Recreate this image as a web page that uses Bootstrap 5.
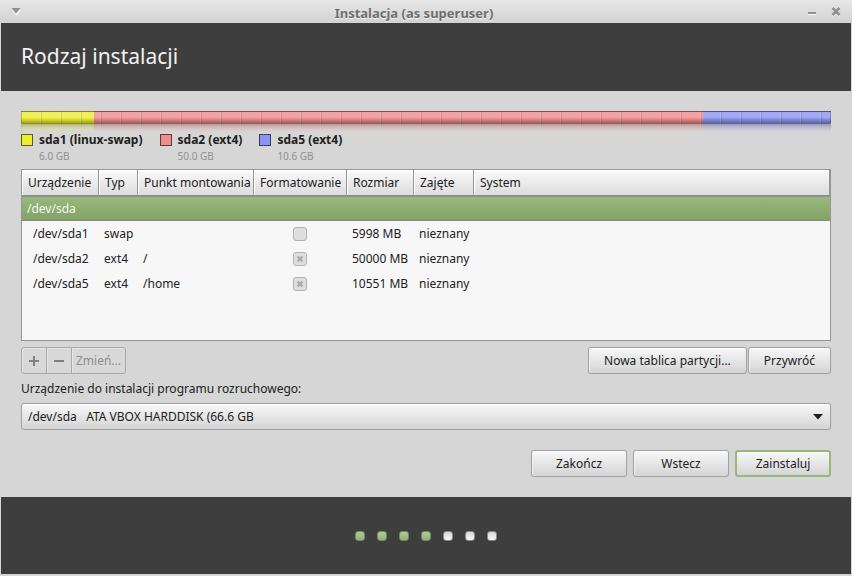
<!DOCTYPE html>
<html lang="pl">
<head>
<meta charset="utf-8">
<meta name="viewport" content="width=device-width, initial-scale=1">
<title>Instalacja (as superuser)</title>
<link href="https://cdn.jsdelivr.net/npm/bootstrap@5.3.0/dist/css/bootstrap.min.css" rel="stylesheet">
<style>
  body {
    font-family: "Noto Sans", "Open Sans", sans-serif;
    font-size: 12px;
    line-height: 16px;
    color: #212121;
    background: #d6d6d6;
  }
  .window-frame { padding: 0 1px 2px; }
  .title-bar {
    height: 23px;
    padding: 0 10px;
    margin: 0 -1px;
    background: linear-gradient(#e6e6e6, #d2d2d2);
    color: #6e6e6e;
    text-shadow: 0 1px #f2f2f2;
  }
  .title-bar h1 { font-size: 13px; line-height: 18px; }
  .title-bar .side-menu { width: 16px; }
  .title-bar .side-controls { width: 40px; }
  .title-bar button { width: 12px; height: 12px; color: #909090; }
  .icon-plain { border: 0; background: none; padding: 0; display: flex; }
  .dark-band { background: #3e3e3e; color: #f2f2f2; }
  .page-head { height: 68px; padding: 0 20px 2px; }
  .page-head h2 { font-size: 21px; line-height: 30px; font-weight: 400; }
  .content-area { padding: 20px 20px 20px; }

  .disk-bar {
    --bs-progress-height: 13px;
    --bs-progress-border-radius: 0;
    border: 0;
    position: relative;
    -webkit-box-reflect: below 0 linear-gradient(transparent 35%, rgba(0, 0, 0, .5));
  }
  .disk-bar::after {
    content: "";
    position: absolute;
    inset: 0;
    border: 1px solid rgba(0, 0, 0, .22);
    border-bottom-color: rgba(0, 0, 0, .4);
    background:
      repeating-linear-gradient(90deg, transparent 0 18px, rgba(255, 255, 255, .12) 18px 19px, rgba(0, 0, 0, .12) 19px 20px),
      linear-gradient(rgba(255, 255, 255, .18), rgba(255, 255, 255, .22) 45%, rgba(0, 0, 0, .05) 65%, rgba(0, 0, 0, .32));
  }
  .fill-swap { background: #eded30; }
  .fill-root { background: #f08c8c; }
  .fill-home { background: #8c94f0; }
  .legend-row { padding-top: 8px; column-gap: 17px; }
  .legend-item { gap: 6px; }
  .swatch { width: 12px; height: 12px; margin-top: 2px; border: 1px solid rgba(0, 0, 0, .6); }
  .legend-size { font-size: 10px; color: #909090; }

  .list-frame { height: 172px; margin-top: 5px; border: 1px solid #959595; background: #f7f7f7; overflow: hidden; }
  .part-table { table-layout: fixed; width: 100%; border-collapse: separate; border-spacing: 0; }
  .part-table th, .part-table td { white-space: nowrap; padding: 0 5px; }
  .part-table thead th {
    height: 27px;
    padding: 0 0 0 6px;
    font-weight: 400;
    border-right: 1px solid #959595;
    border-bottom: 2px solid #8e8e8e;
    background: linear-gradient(#fafafa, #dcdcdc);
    box-shadow: inset 1px 1px #fff;
  }
  .part-table tbody td { height: 25px; }
  .part-table .picked td {
    height: 24px;
    color: #f5f5f5;
    background: linear-gradient(#9ab97c, #82a365);
    border-bottom: 1px solid #878787;
  }
  .part-table td.part-name { padding-left: 11px; }
  .part-table td.format-cell { padding: 0 6px 0 4px; }
  .tick {
    appearance: none;
    display: block;
    width: 14px;
    height: 14px;
    margin: 0 auto;
    border: 1px solid #b2b2b2;
    border-radius: 3px;
    background: #dfdfdf center no-repeat;
  }
  .tick:checked {
    background-image: url("data:image/svg+xml,%3Csvg xmlns='http://www.w3.org/2000/svg' width='8' height='8'%3E%3Cpath d='M1.500 1.500L6.500 6.500M6.500 1.500L1.500 6.500' stroke='%23aaa' stroke-width='2.200'/%3E%3C/svg%3E");
  }

  .gtk-btn {
    --bs-btn-font-size: 12px;
    --bs-btn-line-height: 16px;
    --bs-btn-padding-x: 15px;
    --bs-btn-padding-y: 4px;
    --bs-btn-border-radius: 3px;
    --bs-btn-color: #212121;
    --bs-btn-border-color: #a3a3a3;
    height: 27px;
    background: linear-gradient(#f8f8f8, #d4d4d4);
    box-shadow: inset 0 1px #fff, inset 1px 0 #f2f2f2, 0 0 1px #a8a8a8;
  }
  .gtk-btn.default-action { --bs-btn-border-color: #98b87b; border-width: 2px; padding: 3px 14px; box-shadow: none; }
  .nav-step { width: 96px; }
  .edit-tools { margin-right: auto; }
  .edit-tools .gtk-btn {
    --bs-btn-padding-x: 4px;
    --bs-btn-disabled-color: #8d8d8d;
    --bs-btn-disabled-border-color: #a8a8a8;
    --bs-btn-disabled-opacity: 1;
    min-width: 26px;
    background: #d8d8d8;
    box-shadow: inset 1px 1px #e6e6e6;
  }
  .tool-row { padding-top: 6px; gap: 1px; }
  .device-label { margin-top: 7px; }
  .device-pick { margin-top: 6px; }
  .device-pick select {
    appearance: none;
    display: block;
    width: 100%;
    height: 27px;
    padding: 0 6px;
    border: 1px solid #a3a3a3;
    border-radius: 3px;
    color: #212121;
    background: linear-gradient(#f8f8f8, #d4d4d4);
    box-shadow: inset 0 1px #fff, 0 0 1px #a8a8a8;
  }
  .device-pick svg { position: absolute; right: 8px; top: 11px; pointer-events: none; }
  .nav-row { gap: 6px; margin-top: 20px; }
  .page-foot { flex: 1 0 77px; gap: 12px; }
  .dot { width: 10px; height: 10px; border: 1px solid #8a8a8a; border-radius: 3px; background: linear-gradient(#d8d8d8, #f6f6f6); }
  .dot.done { border-color: #728a5c; background: linear-gradient(#b0cb96, #92b374); }
</style>
</head>
<body>
<div class="window-frame d-flex flex-column min-vh-100">
  <header class="title-bar d-flex align-items-start justify-content-between">
    <div class="side-menu d-flex pt-1 mt-1">
      <button class="icon-plain" type="button" aria-label="Menu okna">
        <svg width="12" height="9" viewBox="0 0 12 9"><path d="M2 2h9L6.500 8z" fill="#f4f4f4"/><path d="M1.500 0h9L6 5.500z" fill="#909090"/></svg>
      </button>
    </div>
    <h1 class="fw-bold mb-0 text-center pt-1">Instalacja (as superuser)</h1>
    <div class="side-controls d-flex justify-content-end gap-2 pt-1">
      <button class="icon-plain me-1" type="button" aria-label="Minimalizuj">
        <svg width="12" height="12" viewBox="0 0 12 12"><path d="M2 10h8v1H2z" fill="#fafafa"/><path d="M2 8h8v2H2z" fill="#909090"/></svg>
      </button>
      <button class="icon-plain" type="button" aria-label="Zamknij">
        <svg width="12" height="14" viewBox="0 0 12 14"><path d="M2.500 5l7 7m0-7l-7 7" stroke="#f4f4f4" stroke-width="2.200"/><path d="M2.500 4l7 7m0-7l-7 7" stroke="#909090" stroke-width="2.600"/></svg>
      </button>
    </div>
  </header>

  <div class="page-head dark-band d-flex align-items-center">
    <h2 class="mb-0">Rodzaj instalacji</h2>
  </div>

  <main class="content-area">
    <div class="progress disk-bar">
      <div class="progress-bar fill-swap" style="width: 9%"></div>
      <div class="progress-bar fill-root" style="width: 75.2%"></div>
      <div class="progress-bar fill-home" style="width: 15.8%"></div>
    </div>
    <div class="legend-row d-flex">
      <div class="legend-item d-flex">
        <span class="swatch fill-swap"></span>
        <div><div class="fw-bold">sda1 (linux-swap)</div><div class="legend-size">6.0 GB</div></div>
      </div>
      <div class="legend-item d-flex">
        <span class="swatch fill-root"></span>
        <div><div class="fw-bold">sda2 (ext4)</div><div class="legend-size">50.0 GB</div></div>
      </div>
      <div class="legend-item d-flex">
        <span class="swatch fill-home"></span>
        <div><div class="fw-bold">sda5 (ext4)</div><div class="legend-size">10.6 GB</div></div>
      </div>
    </div>

    <div class="list-frame">
      <table class="part-table">
        <colgroup>
          <col style="width: 77px"><col style="width: 39px"><col style="width: 116px"><col style="width: 93px"><col style="width: 67px"><col style="width: 60px"><col>
        </colgroup>
        <thead>
          <tr><th scope="col">Urządzenie</th><th scope="col">Typ</th><th scope="col">Punkt montowania</th><th scope="col">Formatowanie</th><th scope="col">Rozmiar</th><th scope="col">Zajęte</th><th scope="col">System</th></tr>
        </thead>
        <tbody>
          <tr class="picked"><td colspan="7">/dev/sda</td></tr>
          <tr><td class="part-name">/dev/sda1</td><td>swap</td><td></td><td class="format-cell"><input class="tick" type="checkbox" disabled aria-label="Formatuj /dev/sda1"></td><td>5998 MB</td><td>nieznany</td><td></td></tr>
          <tr><td class="part-name">/dev/sda2</td><td>ext4</td><td>/</td><td class="format-cell"><input class="tick" type="checkbox" checked disabled aria-label="Formatuj /dev/sda2"></td><td>50000 MB</td><td>nieznany</td><td></td></tr>
          <tr><td class="part-name">/dev/sda5</td><td>ext4</td><td>/home</td><td class="format-cell"><input class="tick" type="checkbox" checked disabled aria-label="Formatuj /dev/sda5"></td><td>10551 MB</td><td>nieznany</td><td></td></tr>
        </tbody>
      </table>
    </div>

    <div class="tool-row d-flex">
      <div class="edit-tools btn-group">
        <button class="btn gtk-btn" type="button" disabled aria-label="Dodaj">
          <svg class="d-block mx-auto" width="16" height="16" viewBox="0 0 16 16"><path d="M3 8h10M8 3v10" stroke="#808080" stroke-width="2"/></svg>
        </button>
        <button class="btn gtk-btn" type="button" disabled aria-label="Usuń">
          <svg class="d-block mx-auto" width="16" height="16" viewBox="0 0 16 16"><path d="M3 8h10" stroke="#808080" stroke-width="2"/></svg>
        </button>
        <button class="btn gtk-btn" type="button" disabled>Zmień...</button>
      </div>
      <button class="btn gtk-btn" type="button">Nowa tablica partycji...</button>
      <button class="btn gtk-btn" type="button">Przywróć</button>
    </div>

    <label class="device-label d-block" for="boot-device">Urządzenie do instalacji programu rozruchowego:</label>
    <div class="device-pick position-relative">
      <select id="boot-device"><option>/dev/sda&nbsp;&nbsp; ATA VBOX HARDDISK (66.6 GB</option></select>
      <svg width="10" height="6" viewBox="0 0 10 6"><path d="M0 0h10L5 5.500z" fill="#212121"/></svg>
    </div>

    <div class="nav-row d-flex justify-content-end">
      <button class="btn gtk-btn nav-step" type="button">Zakończ</button>
      <button class="btn gtk-btn nav-step" type="button">Wstecz</button>
      <button class="btn gtk-btn nav-step default-action" type="button">Zainstaluj</button>
    </div>
  </main>

  <footer class="page-foot dark-band d-flex align-items-center justify-content-center">
    <span class="dot done"></span><span class="dot done"></span><span class="dot done"></span><span class="dot done"></span>
    <span class="dot"></span><span class="dot"></span><span class="dot"></span>
  </footer>
</div>
<script src="https://cdn.jsdelivr.net/npm/bootstrap@5.3.0/dist/js/bootstrap.bundle.min.js"></script>
</body>
</html>
